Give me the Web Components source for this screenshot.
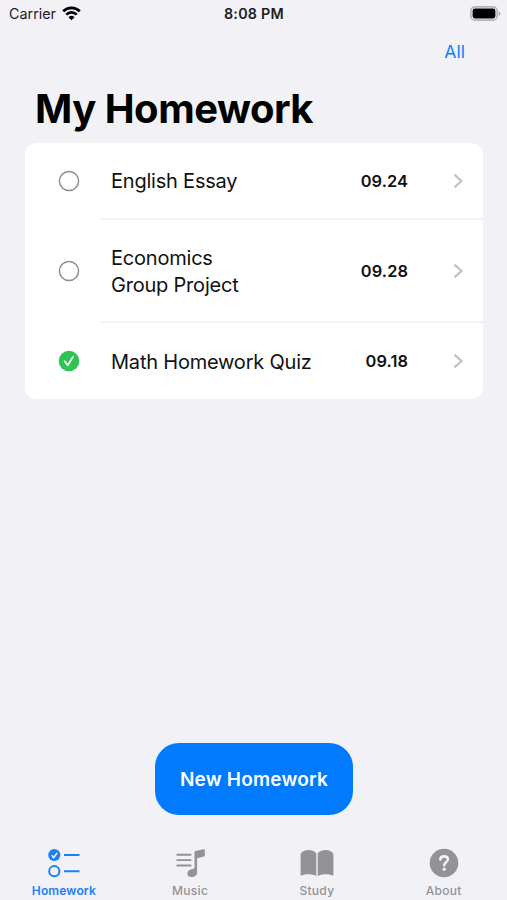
<!DOCTYPE html>
<html lang="en">
<head>
<meta charset="utf-8">
<title>My Homework</title>
<style>
  html, body { margin: 0; height: 100%; }
  body { background: #f1f1f6; color: #000; font-family: Inter, "Liberation Sans", sans-serif; overflow: hidden; }
</style>
</head>
<body>
<homework-app></homework-app>
<script>
  const define = (name, html) => {
    const template = document.createElement('template');
    template.innerHTML = html;
    customElements.define(name, class extends HTMLElement {
      constructor() {
        super();
        this.attachShadow({ mode: 'open' }).append(template.content.cloneNode(true));
      }
    });
  };

  define('status-bar', `
    <style>
      :host { display: grid; grid-template-columns: 1fr auto 1fr; align-items: center; height: 28px; padding: 0 6px 2px 9px; box-sizing: border-box; font-size: 14.3px; color: #1c1c1e; }
      .left { display: flex; align-items: center; gap: 6px; letter-spacing: .02px; }
      .time { font-weight: 600; letter-spacing: .25px; margin-left: -2px; }
      .battery { justify-self: end; }
      svg { display: block; }
    </style>
    <div class="left"><span>Carrier</span>
      <svg width="19" height="15" viewBox="0 0 19 15" fill="none" stroke="#000" stroke-width="2.7">
        <path d="M1.2 5.3a11.8 11.8 0 0 1 16.6 0M4.3 8.6a7.4 7.4 0 0 1 10.4 0"/>
        <path d="M9.5 14.2L6.5 11.2a4.3 4.3 0 0 1 6 0z" fill="#000" stroke="none"/>
      </svg>
    </div>
    <span class="time">8:08 PM</span>
    <svg class="battery" width="31" height="15" viewBox="0 0 31 15">
      <rect x=".9" y=".9" width="26.2" height="13.2" rx="4.2" fill="none" stroke="#b4b4b7" stroke-width="1.6"/>
      <rect x="2.6" y="2.6" width="22.8" height="9.8" rx="2.4"/>
      <path d="M28.6 5.2c2.4 1 2.4 3.6 0 4.6z" fill="#a9a9ad"/>
    </svg>`);

  define('nav-bar', `
    <style>
      :host { display: flex; justify-content: flex-end; align-items: center; height: 48px; padding: 0 42px 2px 0; box-sizing: border-box; color: #1280f5; font-size: 17.6px; }
    </style><slot></slot>`);

  define('page-title', `
    <style>
      :host { display: block; height: 67px; line-height: 66px; padding-left: 35px; font-size: 40px; font-weight: 700; letter-spacing: -.5px; white-space: nowrap; }
    </style><slot></slot>`);

  define('card-list', `
    <style>
      :host { display: block; margin: 0 24px 0 25px; background: #fff; border-radius: 12px; overflow: hidden; }
    </style><slot></slot>`);

  class HomeworkRow extends HTMLElement {
    connectedCallback() {
      const done = this.hasAttribute('done');
      this.attachShadow({ mode: 'open' }).innerHTML = `
        <style>
          :host { display: flex; height: var(--row-height, 76px); }
          .mark { width: 74px; display: flex; align-items: center; padding: 0 0 1px 33px; box-sizing: border-box; }
          .body { flex: 1; display: flex; align-items: center; box-sizing: border-box; padding: 0 19px 0 12px; border-bottom: 2px solid #f4f4f6; }
          :host(:last-child) .body { border-bottom: 0; }
          :host(:last-child) .mark { padding-bottom: 0; }
          .name { flex: 1; font-size: 20px; line-height: 27px; padding-top: 2px; letter-spacing: -.21px; color: #111; }
          .date { font-size: 16.4px; font-weight: 600; color: #111; margin-right: 45px; letter-spacing: .08px; }
          svg { display: block; }
        </style>
        <div class="mark"><svg width="22" height="22" viewBox="0 0 22 22" fill="none">${done
          ? '<circle cx="11" cy="11" r="10.3" fill="#30c455"/><path d="M6.7 11.3l3 4 5.3-8.4" stroke="#fff" stroke-width="1.7" stroke-linecap="round" stroke-linejoin="round"/>'
          : '<circle cx="11" cy="11" r="9.6" stroke="#8e8e91" stroke-width="1.5"/>'}</svg></div>
        <div class="body"><span class="name"><slot></slot></span><span class="date"></span>
          <svg width="11" height="16" viewBox="0 0 11 16" fill="none" stroke="#c3c3c6" stroke-width="2.3"><path d="M1.5 1.6L8.4 8 1.5 14.4"/></svg>
        </div>`;
      this.shadowRoot.querySelector('.date').textContent = this.getAttribute('date');
    }
  }
  customElements.define('homework-row', HomeworkRow);

  define('primary-button', `
    <style>
      :host { display: block; width: 198px; margin: auto auto 28px 155px; }
      button { display: block; width: 100%; height: 72px; border: 0; padding: 0; border-radius: 24px; background: #007aff; color: #fff; font: 600 19px Inter, "Liberation Sans", sans-serif; letter-spacing: .2px; }
    </style><button><slot></slot></button>`);

  define('tab-bar', `
    <style>:host { display: grid; grid-template-columns: repeat(4, 1fr); height: 57px; }</style><slot></slot>`);

  define('tab-item', `
    <style>
      :host { display: flex; flex-direction: column; align-items: center; color: #929297; font-size: 12px; font-weight: 500; line-height: 16px; letter-spacing: .3px; }
      :host([active]) { color: #1a80f5; font-weight: 600; letter-spacing: .15px; padding-left: 1px; }
      .icon { height: 40px; display: flex; align-items: center; }
      ::slotted(svg) { display: block; }
    </style><div class="icon"><slot name="icon"></slot></div><span><slot></slot></span>`);

  define('homework-app', `
    <style>
      :host { display: flex; flex-direction: column; width: 507px; height: 900px; }
      .first { --row-height: 77px; }
      .tall { --row-height: 103px; }
    </style>
    <status-bar></status-bar>
    <nav-bar>All</nav-bar>
    <page-title>My Homework</page-title>
    <card-list>
      <homework-row class="first" date="09.24">English Essay</homework-row>
      <homework-row class="tall" date="09.28">Economics<br>Group Project</homework-row>
      <homework-row date="09.18" done>Math Homework Quiz</homework-row>
    </card-list>
    <primary-button>New Homework</primary-button>
    <tab-bar>
      <tab-item active>
        <svg slot="icon" width="32" height="30" viewBox="0 0 32 30" fill="none" stroke="#1a80f5" stroke-width="2">
          <circle cx="6.3" cy="7" r="6.1" fill="#1a80f5" stroke="none"/><path d="M3.7 7.3l2 2.4 3.5-5" stroke="#f1f1f6" stroke-width="1.6"/>
          <circle cx="6.3" cy="23.2" r="5.1"/><path d="M16 7h15.5M16 23.2h15.5"/>
        </svg>Homework</tab-item>
      <tab-item>
        <svg slot="icon" width="29" height="30" viewBox="0 0 29 30" fill="none" stroke="#929297" stroke-width="1.9">
          <path d="M.5 6.7h14.8M.5 12.1h14.8M.5 17.5h14.8"/>
          <path d="M18.5 4.2Q18.5 3.3 19.5 3L27.5 1.2Q28.8 1 28.8 2.2V8.2L21.1 10.2V24.5C21.1 27.4 18.7 29 15.7 29C13 29 11.4 27.6 11.4 25.4C11.4 22.9 13.6 21.5 16.5 21C18 20.7 18.5 20.4 18.5 19.3Z" fill="#929297" stroke="none"/>
        </svg>Music</tab-item>
      <tab-item>
        <svg slot="icon" width="34" height="28" viewBox="0 0 34 28" fill="#929297">
          <path d="M16.3 27C12.5 24.7 5 24.6 1.7 26.5C1 26.9.6 26.5.6 25.8V5C3.2-.2 12.5-.2 16.3 4.2ZM17.7 27C21.5 24.7 29 24.6 32.3 26.5C33 26.9 33.4 26.5 33.4 25.8V5C30.8-.2 21.5-.2 17.7 4.2Z"/>
        </svg>Study</tab-item>
      <tab-item>
        <svg slot="icon" width="30" height="30" viewBox="0 0 30 30" fill="none">
          <circle cx="15" cy="15" r="14.3" fill="#929297"/>
          <path d="M11.3 11.4C11.4 9.3 12.9 8.4 15.1 8.4C17.4 8.4 18.9 9.5 18.9 11.3C18.9 14.2 15.2 14.3 15.2 17.2" stroke="#f1f1f6" stroke-width="2.6" stroke-linecap="round"/>
          <circle cx="15.2" cy="21.3" r="1.7" fill="#f1f1f6"/>
        </svg>About</tab-item>
    </tab-bar>`);
</script>
</body>
</html>
